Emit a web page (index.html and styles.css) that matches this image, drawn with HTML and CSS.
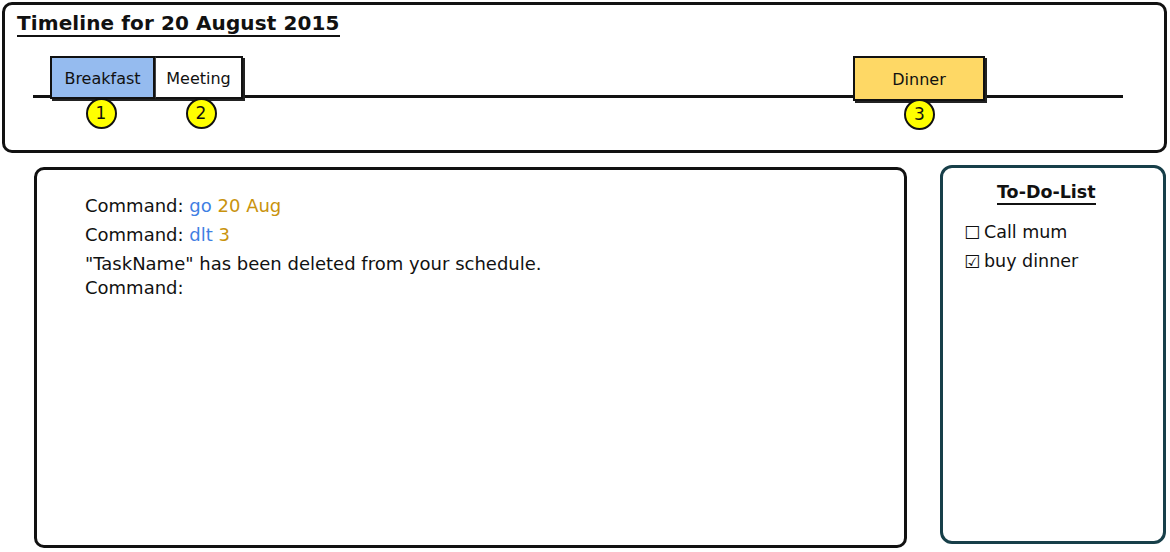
FILE: index.html
```html
<!DOCTYPE html>
<html>
<head>
<meta charset="utf-8">
<link rel="stylesheet" href="styles.css">
</head>
<body>
<div class="page">
  <section class="timeline-box">
    <h1 class="title">Timeline for 20 August 2015</h1>
    <div class="track">
      <div class="line"></div>
      <div class="event-group" style="left:17px">
        <div class="event ev-blue" style="width:105px">Breakfast<span class="badge badge-l">1</span></div>
        <div class="event ev-white" style="width:88px">Meeting<span class="badge badge-r">2</span></div>
      </div>
      <div class="event-group" style="left:820px">
        <div class="event ev-yellow" style="width:132px">Dinner<span class="badge">3</span></div>
      </div>
    </div>
  </section>
  <div class="lower">
    <section class="console">
      <p class="cmd">Command: <span class="kw">go</span> <span class="arg">20 Aug</span></p>
      <p class="cmd">Command: <span class="kw">dlt</span> <span class="arg">3</span></p>
      <p class="msg">"TaskName" has been deleted from your schedule.</p>
      <p class="msg last">Command:</p>
    </section>
    <aside class="todo">
      <h2 class="todo-title">To-Do-List</h2>
      <ul class="todo-list">
        <li><span class="box">☐</span>Call mum</li>
        <li><span class="box">☑</span>buy dinner</li>
      </ul>
    </aside>
  </div>
</div>
</body>
</html>
```

FILE: styles.css
```css
* { box-sizing: border-box; }
html, body { margin: 0; padding: 0; background: #fff; }
body {
  font-family: "DejaVu Sans", "Open Sans", sans-serif;
  color: #111;
}
.page {
  padding: 2px 3px 0 2px;
  width: 1170px;
}
.timeline-box {
  width: 1165px;
  height: 151px;
  border: 3px solid #111;
  border-radius: 10px;
  padding: 6px 0 0 12px;
}
.title {
  display: inline-block;
  margin: 0;
  font-size: 20px;
  font-weight: 700;
  line-height: 24px;
  letter-spacing: 0.1px;
  border-bottom: 2px solid #111;
}
.track {
  position: relative;
  height: 100px;
  margin-left: 16px;
  width: 1090px;
}
.line {
  position: absolute;
  left: 0;
  right: 0;
  top: 58px;
  height: 3px;
  background: #111;
}
.event-group {
  position: absolute;
  top: 19px;
  display: flex;
}
.event {
  position: relative;
  height: 43px;
  border: 2px solid #111;
  box-shadow: 2px 2px 0 #222;
  display: flex;
  align-items: center;
  justify-content: center;
  font-size: 16px;
  padding-top: 1px;
}
.event + .event { border-left: 1px solid #444; }
.ev-blue { background: #95bbef; }
.ev-white { background: #fff; }
.ev-yellow { background: #fed865; height: 45px; }
.badge {
  position: absolute;
  left: 50%;
  top: 40px;
  margin-left: -15px;
  width: 31px;
  height: 31px;
  border: 2px solid #111;
  border-radius: 50%;
  background: #ffff00;
  display: flex;
  align-items: center;
  justify-content: center;
  font-size: 17px;
  line-height: 1;
}
.badge-l { margin-left: -17px; }
.badge-r { margin-left: -13px; }
.ev-yellow .badge { top: 41px; }
.lower {
  display: flex;
  margin-top: 12px;
  padding-left: 32px;
  gap: 33px;
  align-items: flex-start;
}
.console {
  width: 873px;
  height: 381px;
  margin-top: 2px;
  border: 3px solid #111;
  border-radius: 10px;
  padding: 21px 0 0 48px;
}
.cmd, .msg {
  margin: 0;
  font-size: 18px;
  line-height: 29px;
}
.msg.last { margin-top: -5px; }
.kw { color: #3f7fe3; }
.arg { color: #c9930d; }
.todo {
  width: 226px;
  height: 379px;
  border: 3px solid #173f49;
  border-radius: 12px;
  padding: 13px 0 0 21px;
}
.todo-title {
  margin: 0 0 13px 33px;
  display: inline-block;
  font-size: 17.5px;
  font-weight: 700;
  line-height: 22px;
  border-bottom: 2px solid #111;
}
.todo-list {
  list-style: none;
  margin: 0;
  padding: 0;
}
.todo-list li {
  font-size: 17.5px;
  line-height: 29px;
  display: flex;
  align-items: center;
}
.box {
  font-family: "DejaVu Sans", sans-serif;
  font-size: 18px;
  width: 20px;
  line-height: 1;
}
```
